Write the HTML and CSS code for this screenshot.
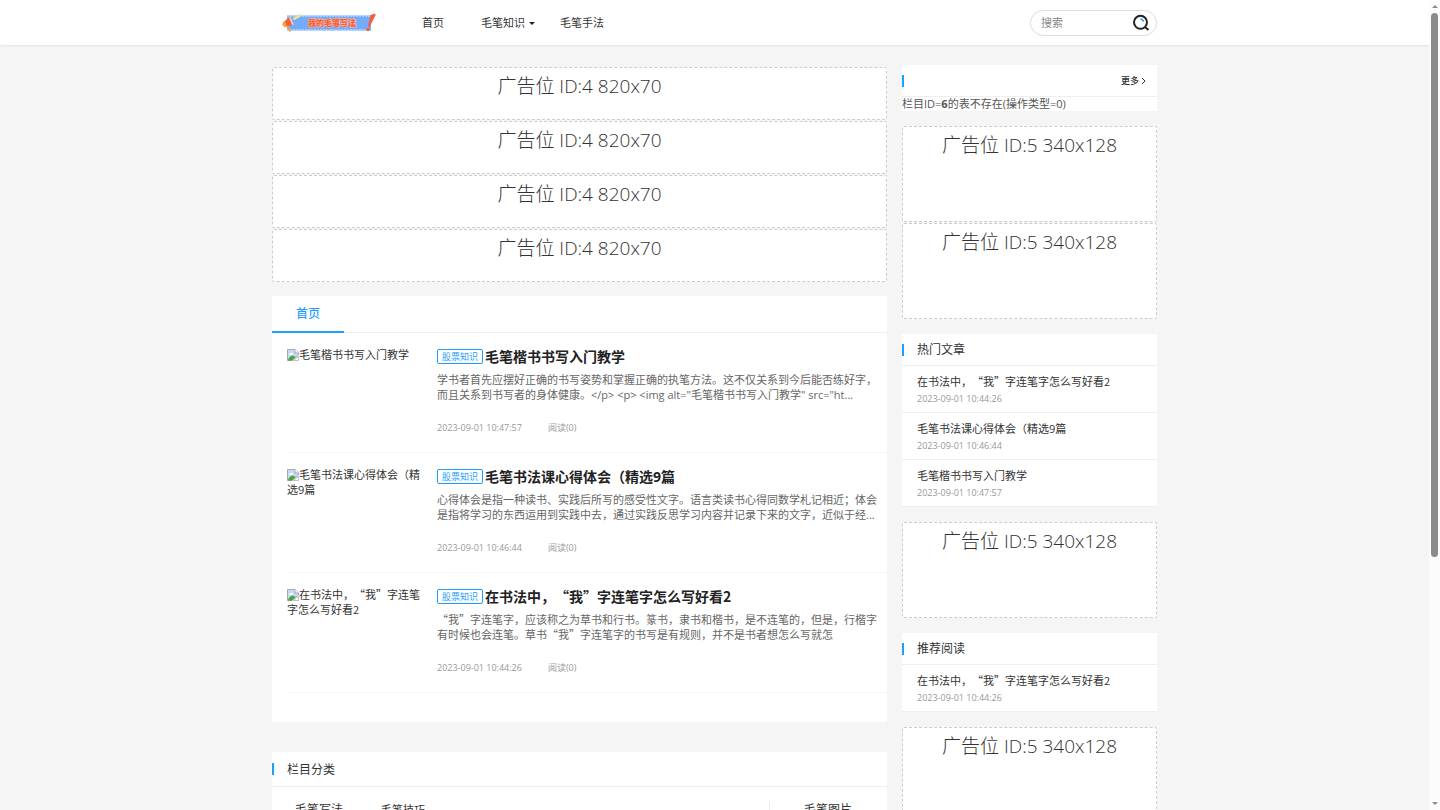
FILE: index.html
```html
<!DOCTYPE html>
<html lang="zh-CN">
<head>
<meta charset="utf-8">
<meta name="viewport" content="width=device-width, initial-scale=1">
<title>我的毛笔写法</title>
<link rel="stylesheet" href="styles.css">
</head>
<body>
<svg class="defs" aria-hidden="true">
  <symbol id="broken" viewBox="0 0 12 12">
    <path d="M.5.5h7.500l3.500 3.500V6L5 11.500H.5z" fill="#c5d9f7" stroke="#a5a8ad"/>
    <path d="M8 .5V4h3.500" fill="#fff" stroke="#a5a8ad"/>
    <path d="M2 5.500c0-1 1-1.500 2-1 .5-1 2-.8 2 .5v.8H2z" fill="#fff"/>
    <path d="M1 11c1-3 3-4.500 5-4.500L8.500 8 5 11.500H1z" fill="#4aa53c"/>
    <path d="M6.500 11.500h5V7.500z" fill="#fff" stroke="#a5a8ad" stroke-width=".7"/>
  </symbol>
</svg>
<div class="page">
  <header class="header">
    <div class="container header-row">
      <a class="logo" href="#" aria-label="我的毛笔写法">
        <svg viewBox="0 0 96 20" width="96" height="20">
          <rect x="6" y="2.500" width="84" height="15" fill="#74abfb"/>
          <path d="M6 3.500h84M6 16.500h84" stroke="#a9ccff" stroke-dasharray="2 1"/>
          <text class="logo-text" x="51" y="13" text-anchor="middle">我的毛笔写法</text>
          <path d="M2 9.500 8.500 4l3.500 8-7.500 2z" fill="#f2603c"/>
          <path d="M1 11 4 8l1.500 5L3 14z" fill="#f9a23e"/>
          <path d="m8.500 4 3.500 8" stroke="#ffd3a0" stroke-width="1.500"/>
          <path d="m6 13 3.500 5.500" stroke="#f9a23e" stroke-width="2"/>
          <path d="M12 5.500q2 1 3-1 2 1 4-3.500" fill="none" stroke="#f6e88a" stroke-width="2"/>
          <path d="m89.500 2 4.500-1.500.5 2-6 11.500-1.500-1z" fill="#f2603c"/>
          <circle cx="87" cy="16.500" r="1.800" fill="#f2603c"/>
        </svg>
      </a>
      <nav class="nav">
        <a href="#">首页</a>
        <a href="#">毛笔知识<span class="caret"></span></a>
        <a href="#">毛笔手法</a>
      </nav>
      <form class="search">
        <input type="text" placeholder="搜索" aria-label="搜索">
        <button type="button" aria-label="搜索">
          <svg viewBox="0 0 18 18" width="18" height="18" fill="none">
            <circle cx="8.500" cy="8.300" r="6.500" stroke="#222" stroke-width="2"/>
            <path d="m13 13 3.500 3" stroke="#222" stroke-width="2"/>
            <path d="M8.500 5q2.500.3 3 2.700" stroke="#1e9fff" stroke-width="1.600"/>
          </svg>
        </button>
      </form>
    </div>
  </header>

  <div class="container columns">
    <main>
      <div class="ads ads-wide">
        <div class="ad">广告位 ID:4 820x70</div>
        <div class="ad">广告位 ID:4 820x70</div>
        <div class="ad">广告位 ID:4 820x70</div>
        <div class="ad">广告位 ID:4 820x70</div>
      </div>

      <section class="card feed">
        <div class="tabs"><a class="tab" href="#">首页</a></div>
        <article class="post">
          <a class="thumb" href="#"><svg><use href="#broken"/></svg>毛笔楷书书写入门教学</a>
          <div class="post-body">
            <h2><a class="tag" href="#">股票知识</a><a href="#">毛笔楷书书写入门教学</a></h2>
            <p class="summary">学书者首先应摆好正确的书写姿势和掌握正确的执笔方法。这不仅关系到今后能否练好字，而且关系到书写者的身体健康。&lt;/p&gt; &lt;p&gt; &lt;img alt="毛笔楷书书写入门教学" src="ht...</p>
            <p class="meta"><time>2023-09-01 10:47:57</time><span>阅读(0)</span></p>
          </div>
        </article>
        <article class="post">
          <a class="thumb" href="#"><svg><use href="#broken"/></svg>毛笔书法课心得体会（精选9篇</a>
          <div class="post-body">
            <h2><a class="tag" href="#">股票知识</a><a href="#">毛笔书法课心得体会（精选9篇</a></h2>
            <p class="summary">心得体会是指一种读书、实践后所写的感受性文字。语言类读书心得同数学札记相近；体会是指将学习的东西运用到实践中去，通过实践反思学习内容并记录下来的文字，近似于经...</p>
            <p class="meta"><time>2023-09-01 10:46:44</time><span>阅读(0)</span></p>
          </div>
        </article>
        <article class="post">
          <a class="thumb cjk" href="#"><svg><use href="#broken"/></svg>在书法中，“我”字连笔字怎么写好看2</a>
          <div class="post-body">
            <h2><a class="tag" href="#">股票知识</a><a class="cjk" href="#">在书法中，“我”字连笔字怎么写好看2</a></h2>
            <p class="summary cjk">“我”字连笔字，应该称之为草书和行书。篆书，隶书和楷书，是不连笔的，但是，行楷字有时候也会连笔。草书“我”字连笔字的书写是有规则，并不是书者想怎么写就怎</p>
            <p class="meta"><time>2023-09-01 10:44:26</time><span>阅读(0)</span></p>
          </div>
        </article>
      </section>

      <section class="card categories">
        <div class="head"><h3>栏目分类</h3></div>
        <div class="category-row">
          <div class="category">
            <a class="category-name" href="#">毛笔写法</a>
            <a href="#">毛笔技巧</a>
          </div>
          <div class="category category-side">
            <a class="category-name" href="#">毛笔图片</a>
          </div>
        </div>
      </section>
    </main>

    <aside>
      <section class="card">
        <div class="head"><a class="more" href="#">更多<svg viewBox="0 0 6 8" width="6" height="8" fill="none"><path d="m1 1 3 3-3 3" stroke="#333"/></svg></a></div>
        <p class="notice">栏目ID=<b>6</b>的表不存在(操作类型=0)</p>
      </section>
      <div class="ads">
        <div class="ad">广告位 ID:5 340x128</div>
        <div class="ad">广告位 ID:5 340x128</div>
      </div>
      <section class="card">
        <div class="head"><h3>热门文章</h3></div>
        <ul class="list">
          <li><a class="cjk" href="#">在书法中，“我”字连笔字怎么写好看2</a><time>2023-09-01 10:44:26</time></li>
          <li><a href="#">毛笔书法课心得体会（精选9篇</a><time>2023-09-01 10:46:44</time></li>
          <li><a href="#">毛笔楷书书写入门教学</a><time>2023-09-01 10:47:57</time></li>
        </ul>
      </section>
      <div class="ads">
        <div class="ad">广告位 ID:5 340x128</div>
      </div>
      <section class="card">
        <div class="head"><h3>推荐阅读</h3></div>
        <ul class="list">
          <li><a class="cjk" href="#">在书法中，“我”字连笔字怎么写好看2</a><time>2023-09-01 10:44:26</time></li>
        </ul>
      </section>
      <div class="ads">
        <div class="ad">广告位 ID:5 340x128</div>
      </div>
    </aside>
  </div>
</div>
<div class="scrollbar" aria-hidden="true">
  <span class="arrow arrow-up"></span>
  <span class="thumb-bar"></span>
  <span class="arrow arrow-down"></span>
</div>
</body>
</html>
```

FILE: styles.css
```css
* { box-sizing: border-box; }
body, h2, h3, p, ul { margin: 0; padding: 0; }
body {
  padding-right: 11px;
  background: #f5f5f5;
  color: #333;
  font-family: "Open Sans", "Noto Sans CJK SC", sans-serif;
  font-size: 11px;
  line-height: 15px;
  text-spacing-trim: space-all;
}
a { color: inherit; text-decoration: none; }
ul { list-style: none; }
.defs { display: none; }
.cjk { font-family: "Noto Sans CJK SC", sans-serif; }

.page { height: 100vh; overflow: hidden; }
.container { width: 100%; max-width: 885px; margin: 0 auto; }

.header { background: #fff; box-shadow: 0 1px 2px rgba(0, 0, 0, .08); }
.header-row { display: flex; align-items: center; height: 45px; }
.logo { display: block; height: 20px; margin-left: 9px; }
.logo svg { display: block; }
.logo-text {
  font-family: "Noto Sans CJK SC", sans-serif;
  font-size: 8px;
  font-weight: 900;
  fill: #f4603e;
  stroke: #ffb9a0;
  stroke-width: 1px;
  paint-order: stroke;
}
.nav { display: flex; gap: 25px; margin-left: 45px; }
.nav a:first-child { margin-right: 12px; }
.caret {
  display: inline-block;
  margin-left: 4px;
  border: 3px solid transparent;
  border-top-color: #222;
  border-bottom: 0;
  vertical-align: 2px;
}
.search {
  display: flex;
  align-items: center;
  width: 127px;
  height: 26px;
  margin-left: auto;
  padding: 0 6px 0 10px;
  border: 1px solid #ddd;
  border-radius: 13px;
}
.search input {
  flex: 1;
  min-width: 0;
  padding: 0;
  border: 0;
  outline: 0;
  background: none;
  font: inherit;
}
.search input::placeholder { color: #888; }
.search button { padding: 0; border: 0; background: none; }
.search svg { display: block; }

.columns {
  display: grid;
  grid-template-columns: minmax(0, 1fr) 255px;
  gap: 15px;
  align-items: start;
  padding-top: 20px;
}
aside { display: flex; flex-direction: column; gap: 15px; }
.card { background: #fff; }

.ads { display: flex; flex-direction: column; gap: 1px; }
.ad {
  min-height: 96px;
  padding-top: 4px;
  border: 1px dashed #ccc;
  border-radius: 2px;
  background: #fff;
  font-size: 19px;
  font-weight: 300;
  line-height: 28px;
  text-align: center;
}
.ads-wide { padding-top: 2px; }
.ads-wide .ad { min-height: 53px; }

.feed { margin-top: 14px; padding-bottom: 29px; }
.tabs { display: flex; border-bottom: 1px solid #eee; }
.tab {
  margin-bottom: -1px;
  padding: 10px 24px 9px;
  border-bottom: 2px solid #1e9fff;
  color: #1e9fff;
  font-size: 12px;
  font-weight: 500;
  line-height: 16px;
}
.post {
  display: flex;
  gap: 15px;
  height: 120px;
  margin-left: 15px;
  padding: 14px 10px 0 0;
  border-bottom: 1px solid #f5f5f5;
}
.thumb { flex: none; width: 135px; }
.thumb svg { width: 12px; height: 12px; vertical-align: -2px; }
.post-body { flex: 1; min-width: 0; }
.post h2 {
  display: flex;
  align-items: center;
  gap: 2px;
  height: 19px;
  color: #222;
  font-size: 14px;
  font-weight: 700;
  line-height: 19px;
}
.tag {
  padding: 0 4px;
  border: 1px solid #1e9fff;
  border-radius: 2px;
  color: #1e9fff;
  font-size: 9px;
  font-weight: 400;
  line-height: 13px;
}
.summary { height: 30px; margin-top: 6px; overflow: hidden; color: #666; }
.meta { display: flex; gap: 26px; margin-top: 18px; color: #999; font-size: 9px; }

.head {
  display: flex;
  align-items: center;
  min-height: 32px;
  border-bottom: 1px solid #eee;
}
.head::before { width: 2px; height: 12px; background: #1e9fff; content: ""; }
.head h3 { margin-left: 13px; font-size: 12px; font-weight: 400; }
.more {
  display: flex;
  align-items: center;
  gap: 2px;
  margin: 0 10px 0 auto;
  font-size: 9px;
  font-weight: 500;
}
.notice { color: #555; line-height: 14px; }

.list li { padding: 8px 15px 6px; border-bottom: 1px solid #eee; }
.list a, .list time { display: block; }
.list a { margin-bottom: 2px; }
.list time { color: #999; font-size: 9px; }

.categories { margin-top: 30px; }
.categories .head { min-height: 35px; }
.category-row { display: flex; padding-top: 15px; }
.category {
  display: flex;
  flex: 1;
  gap: 38px;
  height: 40px;
  padding-left: 23px;
}
.category-side { flex: 0 0 118px; padding-left: 34px; border-left: 1px solid #eee; }
.category-name { font-size: 12px; }

.scrollbar {
  position: fixed;
  top: 0;
  right: 0;
  bottom: 0;
  display: flex;
  flex-direction: column;
  align-items: center;
  width: 11px;
  padding: 5px 0;
  background: #fcfcfc;
}
.thumb-bar { width: 7px; height: 68%; margin-top: 5px; border-radius: 4px; background: #8b8b8b; }
.arrow { border: 3px solid transparent; }
.arrow-up { border-top: 0; border-bottom-color: #8b8b8b; }
.arrow-down { margin-top: auto; border-bottom: 0; border-top-color: #8b8b8b; }
```
